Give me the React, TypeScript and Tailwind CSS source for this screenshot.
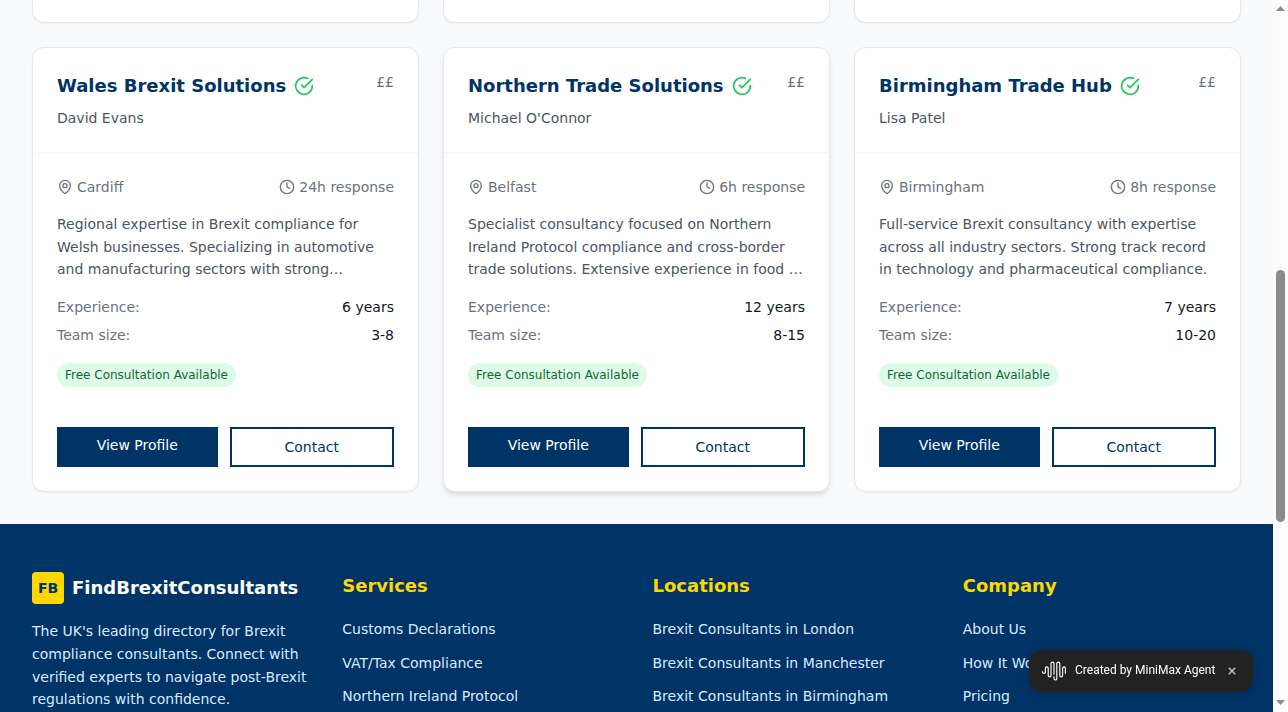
import React from "react";
import { Clock, MapPin } from "lucide-react";

type Consultant = {
  name: string;
  person: string;
  city: string;
  response: string;
  bio: string;
  years: string;
  team: string;
  raised?: boolean;
};

const consultants: Consultant[] = [
  {
    name: "Wales Brexit Solutions",
    person: "David Evans",
    city: "Cardiff",
    response: "24h response",
    bio: "Regional expertise in Brexit compliance for Welsh businesses. Specializing in automotive and manufacturing sectors with strong…",
    years: "6 years",
    team: "3-8",
  },
  {
    name: "Northern Trade Solutions",
    person: "Michael O'Connor",
    city: "Belfast",
    response: "6h response",
    bio: "Specialist consultancy focused on Northern Ireland Protocol compliance and cross-border trade solutions. Extensive experience in food …",
    years: "12 years",
    team: "8-15",
    raised: true,
  },
  {
    name: "Birmingham Trade Hub",
    person: "Lisa Patel",
    city: "Birmingham",
    response: "8h response",
    bio: "Full-service Brexit consultancy with expertise across all industry sectors. Strong track record in technology and pharmaceutical compliance.",
    years: "7 years",
    team: "10-20",
  },
];

const linkColumns = [
  { title: "Services", links: ["Customs Declarations", "VAT/Tax Compliance", "Northern Ireland Protocol"] },
  {
    title: "Locations",
    links: ["Brexit Consultants in London", "Brexit Consultants in Manchester", "Brexit Consultants in Birmingham"],
  },
  { title: "Company", links: ["About Us", "How It Works", "Pricing"] },
];

function VerifiedIcon() {
  return (
    <svg
      className="h-5 w-5 text-[#22c55e]"
      viewBox="0 0 24 24"
      fill="none"
      stroke="currentColor"
      strokeWidth="2"
      strokeLinecap="round"
      strokeLinejoin="round"
    >
      <path d="M22 11.08V12a10 10 0 1 1-5.93-9.14" />
      <path d="m9 11 3 3L22 4" />
    </svg>
  );
}

function Card({ c }: { c: Consultant }) {
  const shadow = c.raised
    ? "shadow-[0_4px_6px_-1px_rgba(0,0,0,0.1),0_2px_4px_-2px_rgba(0,0,0,0.1)]"
    : "shadow-[0_1px_2px_0_rgba(0,0,0,0.05)]";
  return (
    <article className={`flex h-[445px] flex-col rounded-xl border border-[#e5e7eb] bg-white text-sm ${shadow}`}>
      <header className="border-b border-[#f3f4f6] p-6">
        <div className="flex items-start justify-between">
          <div>
            <div className="mb-2 flex items-center gap-2">
              <h3 className="text-lg font-bold whitespace-nowrap text-[#003366]">{c.name}</h3>
              <VerifiedIcon />
            </div>
            <p className="text-[#4b5563]">{c.person}</p>
          </div>
          <span className="text-[#6b7280]">££</span>
        </div>
      </header>
      <div className="px-6 pt-6">
        <div className="mb-[15.75px] flex items-center justify-between text-[#6b7280]">
          <span className="flex items-center gap-1">
            <MapPin className="h-4 w-4" />
            {c.city}
          </span>
          <span className="flex items-center gap-1">
            <Clock className="h-4 w-4" />
            {c.response}
          </span>
        </div>
        <p className="mb-4 leading-relaxed text-[#4b5563]">{c.bio}</p>
        <dl className="space-y-2">
          <div className="flex justify-between">
            <dt className="text-[#6b7280]">Experience:</dt>
            <dd className="font-medium text-[#111827]">{c.years}</dd>
          </div>
          <div className="flex justify-between">
            <dt className="text-[#6b7280]">Team size:</dt>
            <dd className="font-medium text-[#111827]">{c.team}</dd>
          </div>
        </dl>
        <div className="flex pt-[18px]">
          <span className="rounded-full bg-[#dcfce7] px-2 py-1 text-xs font-medium text-[#166534]">
            Free Consultation Available
          </span>
        </div>
      </div>
      <div className="mt-auto flex gap-3 px-6 pb-6 text-center font-medium">
        <a className="flex-1 bg-[#003366] px-4 py-2 text-white">View Profile</a>
        <a className="flex-1 border-2 border-[#003366] px-4 py-2 text-[#003366]">Contact</a>
      </div>
    </article>
  );
}

function WaveMark() {
  return (
    <svg width="26" height="22" viewBox="0 0 26 22" fill="none" stroke="white" strokeWidth="1.15" strokeLinecap="round">
      <path d="M1.6 11.5v.6a1.4 1.4 0 0 0 2.8 0V8.3a1.4 1.4 0 0 1 2.8 0v7.3a1.4 1.4 0 0 0 2.8 0V3.6a1.5 1.5 0 0 1 3 0v10.6" />
      <path d="M13 16.6v2a1.4 1.4 0 0 0 2.8 0V3.6a1.5 1.5 0 0 1 3 0v12a1.4 1.4 0 0 0 2.8 0V8.3a1.4 1.4 0 0 1 2.8 0v5" />
    </svg>
  );
}

export default function App() {
  return (
    <div className="flex h-[712px] overflow-hidden bg-[#f9fafb] font-['DejaVu_Sans',sans-serif]">
      <div className="flex min-w-0 flex-1 flex-col">
        <main className="shrink-0 px-8 pb-8">
          <div className="mb-6 grid grid-cols-3 gap-6">
            {consultants.map((c) => (
              <div
                key={c.name}
                className="h-[23px] rounded-b-xl border border-t-0 border-[#e5e7eb] bg-white shadow-[0_1px_2px_0_rgba(0,0,0,0.05)]"
              />
            ))}
          </div>
          <div className="grid grid-cols-3 gap-6">
            {consultants.map((c) => (
              <Card key={c.name} c={c} />
            ))}
          </div>
        </main>
        <footer className="grid flex-1 grid-cols-4 gap-8 bg-[#003366] px-8 pt-12">
          <div>
            <div className="mb-4 flex items-center gap-2">
              <span className="flex h-8 w-8 items-center justify-center rounded bg-[#ffd700] text-sm font-bold text-[#003366]">
                FB
              </span>
              <span className="text-lg font-bold text-white">FindBrexitConsultants</span>
            </div>
            <p className="text-sm leading-relaxed text-[#dbeafe]">
              The UK's leading directory for Brexit compliance consultants. Connect with verified experts to navigate
              post-Brexit regulations with confidence.
            </p>
          </div>
          {linkColumns.map((col) => (
            <nav key={col.title}>
              <h4 className="mb-4 text-lg font-bold text-[#ffd700]">{col.title}</h4>
              <ul className="space-y-2 leading-[25.6px]">
                {col.links.map((l) => (
                  <li key={l}>
                    <a className="text-sm leading-5 text-[#dbeafe]">{l}</a>
                  </li>
                ))}
              </ul>
            </nav>
          ))}
        </footer>
      </div>
      <div className="flex w-[15px] shrink-0 flex-col items-center bg-[#fcfcfc]">
        <svg width="15" height="15" viewBox="0 0 15 15" fill="#8b8b8b">
          <path d="M3 11h9L7.5 6z" />
        </svg>
        <div className="mt-[255px] h-[252px] w-[9px] rounded-full bg-[#8b8b8b]" />
        <svg className="mt-auto" width="15" height="15" viewBox="0 0 15 15" fill="#8b8b8b">
          <path d="M3 3h9L7.5 8z" />
        </svg>
      </div>
      <div className="fixed right-[35px] bottom-5 flex h-[42px] w-[224px] items-center rounded-xl bg-[#222222] pl-3 font-[Roboto,sans-serif] text-xs font-normal text-white shadow-[0_2px_8px_rgba(0,0,0,0.15)]">
        <WaveMark />
        <span className="ml-2 w-[140px] pb-0.5 whitespace-nowrap">Created by MiniMax Agent</span>
        <svg className="ml-[13px]" width="8" height="8" viewBox="0 0 8 8" stroke="#c4c4c4" strokeWidth="1.4">
          <path d="M.8.8l6.4 6.4M7.2.8.8 7.2" />
        </svg>
      </div>
    </div>
  );
}
